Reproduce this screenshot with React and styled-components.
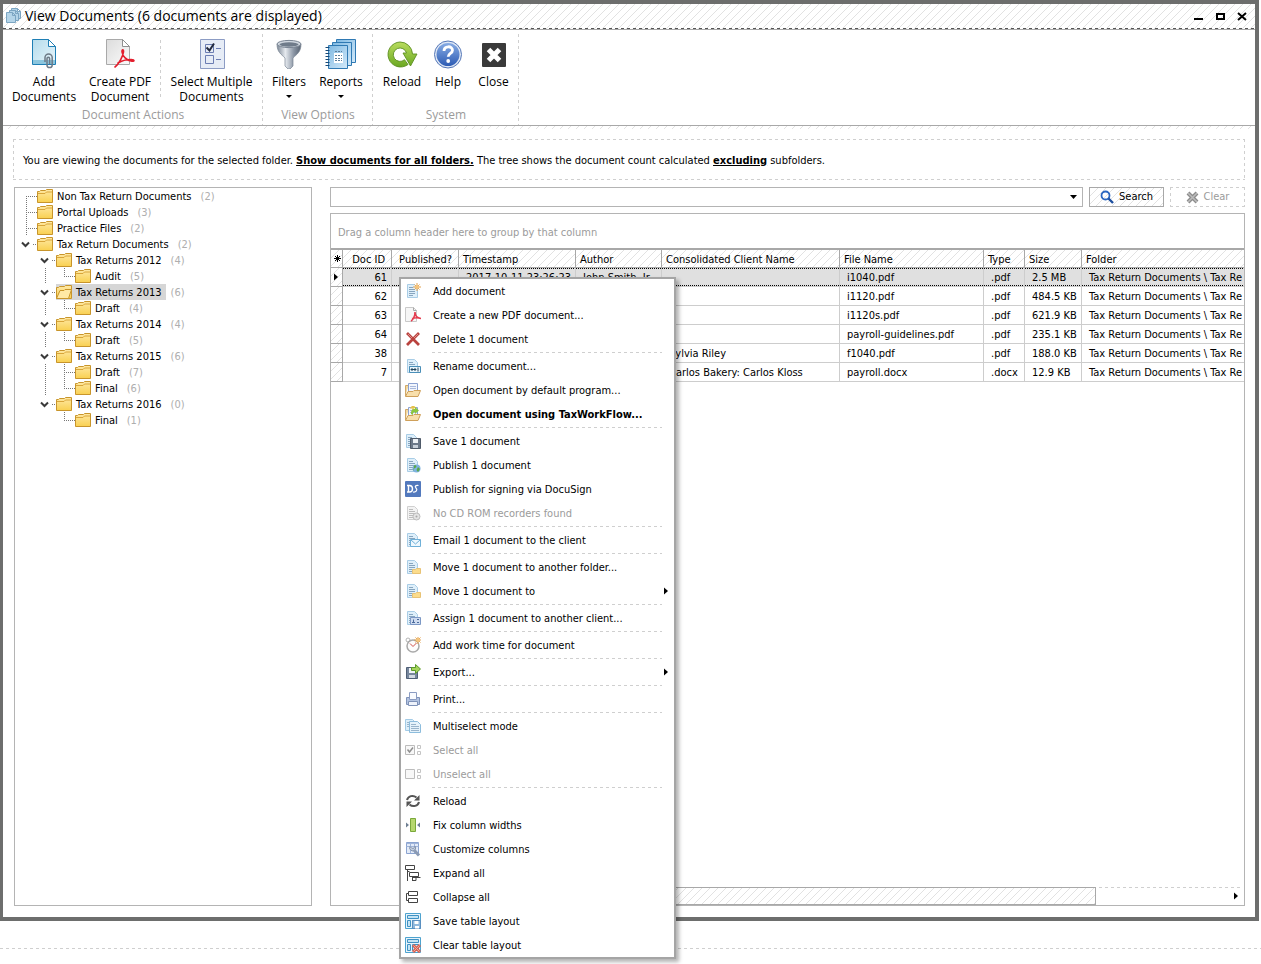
import React from "react";
import styled, { createGlobalStyle, css } from "styled-components";

const UI_FONT = '"DejaVu Sans Condensed", "Noto Sans", sans-serif';
const RIBBON_FONT = '"Open Sans", "Noto Sans", sans-serif';

const hatch = css`
  background-color: #fff;
  background-image: linear-gradient(
    135deg,
    transparent 45%,
    #e2e2e2 45%,
    #e2e2e2 55%,
    transparent 55%
  );
  background-size: 8px 8px;
`;

const dashX = (color) => `repeating-linear-gradient(90deg, ${color} 0 3px, transparent 3px 6px)`;
const dashY = (color) => `repeating-linear-gradient(180deg, ${color} 0 3px, transparent 3px 6px)`;

const dashedFrame = css`
  background-image: ${dashX("#cfcfcf")}, ${dashX("#cfcfcf")}, ${dashY("#cfcfcf")}, ${dashY("#cfcfcf")};
  background-size: 100% 1px, 100% 1px, 1px 100%, 1px 100%;
  background-position: top, bottom, left, right;
  background-repeat: no-repeat;
`;

const GlobalStyle = createGlobalStyle`
  * { box-sizing: border-box; }
  body {
    margin: 0;
    background: #fff;
    color: #000;
    font: 11px/16px ${UI_FONT};
  }
  button, input { font: inherit; color: inherit; }
`;

const Page = styled.div`
  position: relative;
  display: flex;
  flex-direction: column;
  min-height: 100vh;
`;

const Window = styled.main`
  flex: 1;
  display: flex;
  flex-direction: column;
  margin-right: 2px;
  border: 4px solid #6d6e6d;
  border-left-width: 3px;
`;

const Desk = styled.footer`
  height: 43px;
  padding-top: 27px;
  &::before {
    content: "";
    display: block;
    height: 1px;
    background: ${dashX("#cfcfcf")};
  }
`;

const TitleBar = styled.header`
  ${hatch}
  display: flex;
  align-items: center;
  gap: 4px;
  height: 26px;
  padding: 0 8px 2px 3px;
  border-bottom: 1px solid #a8a8a8;
  position: relative;
  &::after {
    content: "";
    position: absolute;
    left: 0;
    right: 0;
    bottom: 0;
    height: 1px;
    background: ${dashX("#555")};
  }
`;

const Title = styled.h1`
  flex: 1;
  margin: 0;
  font: 400 14px/20px ${RIBBON_FONT};
`;

const WindowButtons = styled.div`
  display: flex;
  gap: 12px;
`;

const PlainButton = styled.button`
  display: flex;
  padding: 0;
  border: 0;
  background: none;
`;

const Ribbon = styled.nav`
  display: flex;
  height: 96px;
  padding-top: 4px;
  border-bottom: 1px solid #a8a8a8;
  font: 12px/15px ${RIBBON_FONT};
`;

const RibbonEdge = styled.div`
  ${hatch}
  height: 3px;
`;

const Group = styled.section`
  display: flex;
  flex-direction: column;
  justify-content: space-between;
  background: ${dashY("#cfcfcf")} right / 1px 100% no-repeat;
`;

const GroupButtons = styled.div`
  display: flex;
  padding: 0 ${(p) => p.$end}px 0 ${(p) => p.$start}px;
`;

const GroupDivider = styled.span`
  width: 1px;
  height: 58px;
  margin: 6px 2px 0;
  background: ${dashY("#cfcfcf")};
`;

const GroupCaption = styled.h2`
  margin: 0;
  padding-bottom: 3px;
  color: #9b9b9b;
  font: inherit;
  text-align: center;
`;

const RibbonButton = styled.button`
  display: flex;
  flex-direction: column;
  align-items: center;
  width: ${(p) => p.$width}px;
  padding: 3px 0 0;
  border: 0;
  background: none;
  white-space: pre;
  & > svg { margin-bottom: 5px; }
`;

const DropMark = styled.span`
  margin-top: 6px;
  border: 3px solid transparent;
  border-top-color: #000;
  border-bottom: 0;
`;

const Content = styled.div`
  flex: 1;
  display: flex;
  flex-direction: column;
  gap: 7px;
  padding: 10px 10px 11px;
`;

const Notice = styled.p`
  ${dashedFrame}
  margin: 0;
  padding: 14px 10px 11px;
`;

const NoticeLink = styled.a`
  color: #000;
  font-weight: 700;
`;

const Panes = styled.div`
  flex: 1;
  display: flex;
  gap: 18px;
  padding-left: 1px;
`;

const TreePane = styled.ul`
  flex: 0 0 298px;
  margin: 0;
  padding: 0 0 0 3px;
  border: 1px solid #b4b4b4;
  list-style: none;
`;

const TreeRow = styled.li`
  display: flex;
  height: 16px;
  line-height: 18px;
`;

const TreeLabel = styled.a`
  display: flex;
  gap: 4px;
  height: 16px;
  padding-right: 4px;
  color: #000;
  text-decoration: none;
  background: ${(p) => (p.$selected ? "#d6d6d6" : "none")};
`;

const Count = styled.span`
  margin-left: 5px;
  color: #aeaeae;
`;

const ListPane = styled.div`
  flex: 1;
  min-width: 0;
  display: flex;
  flex-direction: column;
  gap: 6px;
`;

const SearchBar = styled.form`
  display: flex;
  gap: 6px;
  height: 20px;
`;

const SearchBox = styled.div`
  flex: 1;
  display: flex;
  align-items: center;
  padding-right: 5px;
  border: 1px solid #b4b4b4;
  & > input {
    flex: 1;
    min-width: 0;
    border: 0;
    padding: 0 4px;
    outline: none;
    background: none;
  }
`;

const SearchButton = styled.button`
  display: flex;
  align-items: center;
  justify-content: center;
  gap: 5px;
  width: 75px;
  padding: 0;
  ${(p) =>
    p.$off
      ? css`
          ${dashedFrame}
          background-color: #fff;
          border: 0;
          color: #9b9b9b;
        `
      : css`
          ${hatch}
          border: 1px solid #a8a8a8;
          color: #000;
        `}
`;

const GridPanel = styled.section`
  flex: 1;
  display: flex;
  flex-direction: column;
  border: 1px solid #b4b4b4;
  overflow: hidden;
`;

const GroupHint = styled.p`
  margin: 0;
  padding: 11px 7px 7px;
  color: #9b9b9b;
`;

const Grid = styled.table`
  width: 100%;
  table-layout: fixed;
  border-collapse: separate;
  border-spacing: 0;
  border-top: 2px solid #a8a8a8;
  white-space: nowrap;
`;

const HeadCell = styled.th`
  ${hatch}
  height: 18px;
  padding: 2px ${(p) => (p.$right ? 6 : 4)}px 0;
  border: 0 solid #a8a8a8;
  border-width: 0 1px 1px 0;
  font-weight: 400;
  line-height: 15px;
  text-align: ${(p) => (p.$right ? "right" : "left")};
  &:last-child { border-right: 0; }
`;

const MarkCell = styled.td`
  ${hatch}
  height: ${(p) => p.$height || 19}px;
  padding: 0 0 0 3px;
  border: 0 solid #a8a8a8;
  border-width: 0 1px 1px 0;
  line-height: 0;
`;

const Cell = styled.td`
  height: 19px;
  padding: 2px 4px 0 7px;
  border: 0 solid #cdcdcd;
  border-width: 0 1px 1px 0;
  line-height: 16px;
  overflow: hidden;
  text-align: ${(p) => (p.$right ? "right" : "left")};
  &:last-child { border-right: 0; padding-right: 0; }
  ${(p) =>
    p.$selected &&
    css`
      background-color: #e0e0e0;
      background-image: linear-gradient(90deg, #000 50%, transparent 50%),
        linear-gradient(90deg, #000 50%, transparent 50%);
      background-size: 2px 1px;
      background-position: left top, left bottom;
      background-repeat: repeat-x;
    `}
`;

const ScrollBar = styled.div`
  display: flex;
  align-items: center;
  gap: 138px;
  height: 18px;
  margin: auto 3px 0 90px;
  padding-right: 3px;
  background: ${dashX("#cfcfcf")} top / 100% 1px no-repeat;
`;

const ScrollThumb = styled.div`
  ${hatch}
  flex: 1;
  height: 18px;
  border: 1px solid #a8a8a8;
`;

const Menu = styled.div`
  position: absolute;
  left: 399px;
  top: 277px;
  width: 277px;
  border: 2px solid #a5a5a5;
  background: #fff;
  box-shadow: 3px 3px 4px rgba(0, 0, 0, 0.3);
`;

const MenuItem = styled.button`
  display: flex;
  align-items: center;
  gap: 12px;
  width: 100%;
  height: 24px;
  padding: 0 6px 0 4px;
  border: 0;
  background: none;
  color: ${(p) => (p.disabled ? "#9b9b9b" : "#000")};
  font-weight: ${(p) => (p.$strong ? 700 : 400)};
  text-align: left;
  & > svg { flex: none; }
  & > span { flex: 1; padding-top: 2px; white-space: nowrap; }
`;

const MenuRule = styled.hr`
  height: 3px;
  margin: 0 12px 0 31px;
  border: 0;
  background: ${dashX("#cfcfcf")} center / 100% 1px no-repeat;
`;

/* ---------- drawings ---------- */

const Svg = ({ s = 16, w = s, h = s, vb, children }) => (
  <svg width={w} height={h} viewBox={vb || `0 0 ${w} ${h}`} fill="none" aria-hidden="true">
    {children}
  </svg>
);

const RightArrow = () => (
  <Svg w={4} h={8}>
    <path d="M0 0.5 4 4 0 7.5z" fill="#000" />
  </Svg>
);

const DownArrow = () => (
  <Svg w={7} h={4}>
    <path d="M0 0h7L3.500 4z" fill="#000" />
  </Svg>
);

const DefsSvg = styled.svg`
  position: absolute;
`;

const Gradients = () => (
  <DefsSvg width="0" height="0" aria-hidden="true">
    <defs>
      <linearGradient id="page" x1="0" y1="0" x2="1" y2="1">
        <stop offset="0" stopColor="#b5dcec" />
        <stop offset="1" stopColor="#e8f5fb" />
      </linearGradient>
      <linearGradient id="grey" x1="0" y1="0" x2="1" y2="1">
        <stop offset="0" stopColor="#dcdcdc" />
        <stop offset="1" stopColor="#fbfbfb" />
      </linearGradient>
      <linearGradient id="steel" x1="0" y1="0" x2="1" y2="0">
        <stop offset="0" stopColor="#7d8896" />
        <stop offset="0.350" stopColor="#e6eaef" />
        <stop offset="0.700" stopColor="#8a95a4" />
        <stop offset="1" stopColor="#566170" />
      </linearGradient>
      <linearGradient id="green" x1="0" y1="0" x2="0" y2="1">
        <stop offset="0" stopColor="#b9dc5e" />
        <stop offset="1" stopColor="#6aa821" />
      </linearGradient>
      <linearGradient id="blue" x1="0" y1="0" x2="0" y2="1">
        <stop offset="0" stopColor="#86abe4" />
        <stop offset="1" stopColor="#2d5cb4" />
      </linearGradient>
      <linearGradient id="book" x1="0" y1="0" x2="1" y2="1">
        <stop offset="0" stopColor="#7fb9e2" />
        <stop offset="1" stopColor="#d4eafa" />
      </linearGradient>
      <linearGradient id="gold" x1="0" y1="0" x2="0" y2="1">
        <stop offset="0" stopColor="#ffe9a6" />
        <stop offset="1" stopColor="#f9d050" />
      </linearGradient>
    </defs>
  </DefsSvg>
);

const TitleIcon = () => (
  <Svg s={15}>
    {[[5, 0], [3, 2], [0, 4]].map(([x, y]) => (
      <path
        key={x}
        transform={`translate(${x} ${y})`}
        d="M.5.5h6l3 3v7h-9z M6.500.5v3h3"
        fill="#b4d4e8"
        stroke="#7ba5c2"
      />
    ))}
  </Svg>
);

const AddDocIcon = () => (
  <Svg s={32}>
    <path d="M4.500 2.500h16l7 7v18h-23z" fill="url(#page)" stroke="#1f7fb5" />
    <path d="M5 23h22v4H5z" fill="#8cc6de" />
    <path d="M20.500 2.500v7h7z" fill="#fff" stroke="#1f7fb5" />
    <path
      d="M17 25v-4.500a3.600 3.600 0 0 1 7.200 0V28a2.600 2.600 0 0 1-5.200 0v-6.500a1.300 1.300 0 0 1 2.600 0V27"
      stroke="#6d7a87"
      strokeWidth="1.500"
    />
  </Svg>
);

const PdfIcon = () => (
  <Svg s={32}>
    <path d="M2.500 2.500h16l7 7v18h-23z" fill="url(#grey)" stroke="#a9a9a9" />
    <path d="M18.500 2.500v7h7z" fill="#fff" stroke="#8f8f8f" />
    <path
      d="M11 30c4-3 8-11 8.500-15 .3-3-1.800-3-1.500 0 .6 4 4 8 9 9 4 .8 4-1.300 0-1.500-5 0-9 1-13 3.500"
      stroke="#e31e2d"
      strokeWidth="1.600"
      strokeLinecap="round"
    />
  </Svg>
);

const SelectIcon = () => (
  <Svg s={32}>
    <path d="M4.500 2.500h24v29h-24z" fill="#e6ecf6" stroke="#8c9cc4" />
    <path d="M9.500 7.500h8v8h-8z M9.500 18.500h8v8h-8z M20 11.500h5 M20 22.500h5" stroke="#6b7db3" />
    <path d="m10.500 10.500 3 3L18 6.500" stroke="#222a3d" strokeWidth="2" />
  </Svg>
);

const FunnelIcon = () => (
  <Svg s={32}>
    <path d="M4 7c0 8 4 10 8 14v8l3 3h2l3-3v-8c4-4 8-6 8-14z" fill="url(#steel)" stroke="#7a8594" strokeWidth=".7" />
    <ellipse cx="16" cy="7" rx="12" ry="3.600" fill="#d0d7df" stroke="#7a8594" />
    <ellipse cx="16" cy="7.500" rx="9.500" ry="2.200" fill="#6f7b8a" />
  </Svg>
);

const ReportsIcon = () => (
  <Svg s={32}>
    <path d="M11.500 2.500h19v23h-19z" fill="url(#book)" stroke="#2f79b3" />
    <path d="M7.500 5.500h19v23h-19z" fill="url(#book)" stroke="#2f79b3" />
    <path d="M3.500 8.500h19v23h-19z" fill="url(#book)" stroke="#2f79b3" />
    <path d="M9 16h9v10H9z" fill="#fff" />
    <path d="M10 14.500h7M10 18.500h7M10 21.500h7M10 23.500h7" stroke="#5d7f9c" strokeDasharray="2 1" />
    <path d="M2.500 10v20" stroke="#174a78" strokeWidth="4" strokeDasharray="1 2" />
  </Svg>
);

const ReloadBigIcon = () => (
  <Svg s={32}>
    <path
      d="M14 5a12.500 12.500 0 1 0 8 22.500l-3.500-4.800a6.700 6.700 0 1 1 2-6.700H17l7.500 13L31 17h-4.500A12.500 12.500 0 0 0 14 5z"
      fill="url(#green)"
      stroke="#5c8f22"
      strokeWidth=".9"
    />
  </Svg>
);

const HelpIcon = () => (
  <Svg s={32}>
    <circle cx="16" cy="17.500" r="13.500" fill="#dfe7f4" stroke="#5477b8" />
    <circle cx="16" cy="17.500" r="11.500" fill="url(#blue)" />
    <path
      d="M12 14c0-5.500 8.500-5.500 8.500-.8 0 3.300-4.300 3.200-4.300 6.600"
      stroke="#fff"
      strokeWidth="2.800"
    />
    <circle cx="16.200" cy="24" r="1.900" fill="#fff" />
  </Svg>
);

const CloseBigIcon = () => (
  <Svg s={32}>
    <rect x="4" y="6" width="24" height="24" rx="1" fill="#3a3a3a" />
    <path d="m10.500 12.500 11 11m0-11-11 11" stroke="#fff" strokeWidth="5" />
  </Svg>
);

const Folder = ({ open }) => (
  <Svg s={16}>
    <path d="M.5 14.500v-11h2l1-1h5l1-1h6v13z" fill="url(#gold)" stroke="#c8952b" />
    {open ? (
      <path d="M.5 14.500 4 6.500h4l1-1h6.500l-3 9z" fill="#ffe9a6" stroke="#c8952b" />
    ) : (
      <path d="M1 5.500h7l1.500-1.500H15" stroke="#d8a53a" />
    )}
  </Svg>
);

const guidePaths = {
  start: "M8.500 8v8M8 8.500h11",
  tee: "M8.500 0v16M8 8.500h11",
  end: "M8.500 0v9M8 8.500h11",
  line: "M8.500 0v16",
  chev: "M15 8.500h4",
  blank: "",
};

const Guide = ({ kind }) => (
  <Svg w={19} h={16}>
    <path d={guidePaths[kind]} stroke="#777" strokeDasharray="1 1" />
    {kind === "chev" && <path d="M4 6.500 7.500 10 11 6.500" stroke="#3a3a3a" strokeWidth="2" />}
  </Svg>
);

const SearchIcon = () => (
  <Svg s={14}>
    <circle cx="5.500" cy="5.500" r="4" stroke="#2a66c0" strokeWidth="1.800" />
    <path d="m8.500 8.500 4.500 4.500" stroke="#1d4f9f" strokeWidth="2.400" />
  </Svg>
);

const ClearIcon = () => (
  <Svg s={13}>
    <path d="m2 2 9 9m0-9-9 9" stroke="#8d8d8d" strokeWidth="4" />
    <path d="m2 2 9 9m0-9-9 9" stroke="#bcbcbc" strokeWidth="1.500" />
  </Svg>
);

const Sheet = ({ x = 1, grey, children }) => (
  <Svg s={16}>
    <path
      transform={`translate(${x} 0)`}
      d="M1.500 1.500h7l3 3v10h-10z"
      fill={grey ? "#f3f3f3" : "#deeffa"}
      stroke={grey ? "#d0d0d0" : "#a9cde6"}
    />
    <path
      transform={`translate(${x} 0)`}
      d="M3 4.500h4M3 6.500h6M3 8.500h6M3 10.500h6M3 12.500h4"
      stroke={grey ? "#bcbcbc" : "#87a5bf"}
    />
    {children}
  </Svg>
);

const Burst = () => (
  <g>
    <path d="M12 0v8M8 4h8M9.500 1.500l5 5m0-5-5 5" stroke="#e2a14e" />
    <circle cx="12" cy="4" r="2" fill="#f4c47c" />
  </g>
);

const OpenTray = ({ children }) => (
  <Svg s={16}>
    <path d="M.5 14V3.500h3" fill="#f3d9a0" stroke="#d0a868" />
    <path d="M3.500 1.500h9v9h-9z" fill="#f2f6fd" stroke="#8ba2d2" />
    <path d="M5 4.500h6M5 6.500h6" stroke="#a9b9dc" />
    {children}
    <path d="M.5 14.500 3 9.500h5l1-1h6.500l-2.500 6z" fill="#f8dfab" stroke="#cfa05a" />
  </Svg>
);

const LayoutFrame = ({ children }) => (
  <Svg s={16}>
    <path d="M.5.5h15v15H.5z" fill="#e7f4fb" stroke="#4ea3cf" />
    <path d="M2.500 2.500h11v3h-11z M2.500 7.500h3v6h-3z M7.500 7.500h6v6h-6z" fill="#c5e4f4" stroke="#3f92c4" />
    {children}
  </Svg>
);

const CheckTiles = ({ ticked }) => (
  <Svg s={16}>
    <path d="M.5 3.500h9v9h-9z" fill="#f8f8f8" stroke="#bcbcbc" />
    <path d="M12.500 3.500h3v3h-3z M12.500 9.500h3v3h-3z" stroke="#c4c4c4" />
    {ticked && <path d="m2.500 7.500 2 2.500L8 5.500" stroke="#8f8f8f" strokeWidth="1.500" />}
  </Svg>
);

const icons = {
  add: <Sheet><Burst /></Sheet>,
  pdf: (
    <Svg s={16}>
      <path d="M.5.5h8l3 3v11H.5z" fill="#f6f6f6" stroke="#c9c9c9" />
      <path d="M8.500.5v3h3" stroke="#a9a9a9" />
      <path d="M6 14c2-1 4-5 4-9m0 0c0 4 2 6 6 6.500M7 11.500c3-1 6-1 9 0" stroke="#e43b4e" strokeWidth="1.500" />
    </Svg>
  ),
  remove: (
    <Svg s={16}>
      <path d="m2 2 12 12M14 2 2 14" stroke="#b9423e" strokeWidth="2.800" />
      <path d="m3 3 4 4m6-4L9 7" stroke="#e08d88" />
    </Svg>
  ),
  rename: (
    <Sheet>
      <path d="M4.500 8.500h11v6h-11z" fill="#eaf6fd" stroke="#4a8fb8" />
      <path d="M6 11.500h5M7.500 10 6 11.500 7.500 13M9.500 10l1.500 1.500L9.500 13M13 9.500v4" stroke="#24455c" />
    </Sheet>
  ),
  openDefault: <OpenTray />,
  openApp: (
    <OpenTray>
      <path d="M8 0v4M5.500 2.500 8 0l3 2.500" stroke="#e6c14a" strokeWidth="1.500" />
      <path d="M6 8c0-4 1-5 4-5V1l4 3.500L10 8V6C8 6 8 7 8 9z" fill="#8cc63f" />
    </OpenTray>
  ),
  save: (
    <Sheet x={0}>
      <path d="M5.500 5.500h10v10h-10z" fill="#6b7889" stroke="#4f5a69" />
      <path d="M8 6h5v4H8z" fill="#edf1f6" />
      <path d="M8 12h5v3H8z" fill="#c8d0da" />
    </Sheet>
  ),
  publish: (
    <Sheet>
      <circle cx="11.500" cy="11.500" r="4" fill="#7fb2e0" />
      <path d="M9 8.500c3-1 3 2 1 2.500s0 3-1.500 2.500zM13 10l2 2-2 3-1.500-2z" fill="#58a845" />
    </Sheet>
  ),
  docusign: (
    <Svg s={16}>
      <rect width="16" height="16" rx="1" fill="#5279bd" />
      <path d="M3.500 4.500v6M2 4.500h2.500c4 0 4 6.500 0 6.500H2" stroke="#fff" strokeWidth="1.400" />
      <path d="M13.500 4.500c-3-.5-4 1-2.500 2.500 2 2 0 4.500-3 4" stroke="#fff" strokeWidth="1.200" />
    </Svg>
  ),
  cd: (
    <Sheet grey>
      <circle cx="11.500" cy="11.500" r="3.500" fill="#e4e4e4" stroke="#bdbdbd" />
      <circle cx="11.500" cy="11.500" r="1" fill="#a8a8a8" />
    </Sheet>
  ),
  email: (
    <Sheet>
      <path d="M5.500 7.500h10v7h-10z" fill="#eef8fe" stroke="#6fb0d8" />
      <path d="m6 8 4.500 4L15 8" stroke="#6fb0d8" />
    </Sheet>
  ),
  move: (
    <Sheet>
      <path d="M7.500 14.500v-4h3l1-1h4v5z" fill="#fbdc8c" stroke="#e8c375" />
    </Sheet>
  ),
  assign: (
    <Sheet>
      <path d="M5.500 7.500h10v7h-10z" fill="#cfdcf0" stroke="#7c98c5" />
      <path d="M8.500 9.500v3M7 12.500h3M12 9.500h2M12 12.500h2" stroke="#4c6b9c" />
    </Sheet>
  ),
  clock: (
    <Svg s={16}>
      <circle cx="3" cy="3" r="2" stroke="#b4b4b4" />
      <circle cx="8" cy="9" r="6" fill="#fdfdfd" stroke="#a9a9a9" strokeWidth="1.500" />
      <path d="m5 6.500 3 3 3.500-3.500" stroke="#d0504a" />
      <g transform="translate(1 -1)"><Burst /></g>
    </Svg>
  ),
  exporting: (
    <Svg s={16}>
      <path d="M1.500 3.500h11v11h-11z" fill="#76869c" stroke="#4f5f76" />
      <path d="M4 4h6v5H4z" fill="#f1f4f8" />
      <path d="M4 11h6v3H4z" fill="#d3dae3" />
      <path d="M6.500 3.500h4v-3l5 4.500-5 4.500v-3h-4z" fill="#a5d45c" stroke="#5c9a2b" />
    </Svg>
  ),
  print: (
    <Svg s={16}>
      <path d="M1.500 6.500h13v7h-13z" fill="#b3c3e0" stroke="#7f92b8" />
      <path d="M4.500 1.500h7v7h-7z" fill="#fafcff" stroke="#8b9cc2" />
      <path d="M3.500 10.500h9v4h-9z" fill="#eef2fa" stroke="#7f92b8" />
    </Svg>
  ),
  multi: (
    <Svg s={16}>
      <path d="M.5 1.500h7l2 2v9h-9z" fill="#deeffa" stroke="#a3cbe6" />
      <path d="M4.500 3.500h8l3 3v8h-11z" fill="#e6f3fb" stroke="#8dbddd" />
      <path d="M6 6.500h5M6 8.500h8M6 10.500h8M6 12.500h8M2 4.500h2M2 6.500h2M2 8.500h2" stroke="#9ab5cc" />
    </Svg>
  ),
  ticked: <CheckTiles ticked />,
  unticked: <CheckTiles />,
  reload: (
    <Svg s={16}>
      <path d="M2 7c1-4 6-5.500 9.500-2.500M14 9c-1 4-6 5.500-9.500 2.500" stroke="#555" strokeWidth="2" />
      <path d="M14.500 2v5.500H9z M1.500 14V8.500H7z" fill="#555" />
    </Svg>
  ),
  widths: (
    <Svg s={16}>
      <path d="M5.500 1.500h5v13h-5z" fill="#b6d76e" stroke="#7aa83a" />
      <path d="M1 5.500 4 8l-3 2.500zM15 5.500 12 8l3 2.500z" fill="#6f7f93" />
    </Svg>
  ),
  customize: (
    <Svg s={16}>
      <path d="M1.500 1.500h12v11h-12z" fill="#e3ebf8" stroke="#8aa3d0" />
      <path d="M1.500 2.500h12M1.500 5.500h12M5.500 2v10M9.500 2v10" stroke="#9fb4da" />
      <path d="m9 9 5 5.500" stroke="#8b9bb5" strokeWidth="3" />
      <path d="M5 5.500a3 3 0 1 0 5-.5L8.500 7.500 6.500 7z" fill="#c3cede" stroke="#8494ad" />
    </Svg>
  ),
  expand: (
    <Svg s={16}>
      <path d="M.5.500h9v4h-9zM4.500 7.500h9v4h-9zM2.500 5v11M2 6.500h2.500M7.500 12v4M7 12.500h8.500M8 15.500h3v-3" stroke="#444" />
    </Svg>
  ),
  collapse: (
    <Svg s={16}>
      <path d="M3.500 2.500h9v4h-9zM3.500 9.500h9v4h-9zM3 4.500H1.500v7H3" stroke="#444" />
    </Svg>
  ),
  layoutSave: (
    <LayoutFrame>
      <path d="M7.500 7.500h8v8h-8z" fill="#8fb8dc" stroke="#5a8fc0" />
      <path d="M9.500 8h4v3h-4zM10 13h4v2.500h-4z" fill="#fff" />
    </LayoutFrame>
  ),
  layoutClear: (
    <LayoutFrame>
      <path d="m8 8 7 7m0-7-7 7" stroke="#d9604f" strokeWidth="3" />
      <path d="m8.500 8.500 6 6m0-6-6 6" stroke="#f0a598" />
    </LayoutFrame>
  ),
};

/* ---------- data ---------- */

const tree = [
  [["start"], "Non Tax Return Documents", 2],
  [["tee"], "Portal Uploads", 3],
  [["tee"], "Practice Files", 2],
  [["chev"], "Tax Return Documents", 2],
  [["blank", "chev"], "Tax Returns 2012", 4],
  [["blank", "line", "end"], "Audit", 5],
  [["blank", "chev"], "Tax Returns 2013", 6, true],
  [["blank", "line", "end"], "Draft", 4],
  [["blank", "chev"], "Tax Returns 2014", 4],
  [["blank", "line", "end"], "Draft", 5],
  [["blank", "chev"], "Tax Returns 2015", 6],
  [["blank", "line", "tee"], "Draft", 7],
  [["blank", "line", "end"], "Final", 6],
  [["blank", "chev"], "Tax Returns 2016", 0],
  [["blank", "blank", "end"], "Final", 1],
];

const columns = [
  { name: "Doc ID", width: 49, right: true },
  { name: "Published?", width: 67, right: true },
  { name: "Timestamp", width: 117 },
  { name: "Author", width: 86 },
  { name: "Consolidated Client Name", width: 178 },
  { name: "File Name", width: 144 },
  { name: "Type", width: 41 },
  { name: "Size", width: 57 },
  { name: "Folder" },
];

const FOLDER = "Tax Return Documents \\ Tax Re";

const rows = [
  ["61", "", "2017-10-11 23:26:23", "John Smith, Jr.", "", "i1040.pdf", ".pdf", "2.5 MB", FOLDER],
  ["62", "", "", "", "", "i1120.pdf", ".pdf", "484.5 KB", FOLDER],
  ["63", "", "", "", "", "i1120s.pdf", ".pdf", "621.9 KB", FOLDER],
  ["64", "", "", "", "", "payroll-guidelines.pdf", ".pdf", "235.1 KB", FOLDER],
  ["38", "", "", "", "Sylvia Riley", "f1040.pdf", ".pdf", "188.0 KB", FOLDER],
  ["7", "", "", "", "Carlos Bakery: Carlos Kloss", "payroll.docx", ".docx", "12.9 KB", FOLDER],
];

const menu = [
  ["add", "Add document"],
  ["pdf", "Create a new PDF document..."],
  ["remove", "Delete 1 document"],
  null,
  ["rename", "Rename document..."],
  ["openDefault", "Open document by default program..."],
  ["openApp", "Open document using TaxWorkFlow...", { strong: true }],
  null,
  ["save", "Save 1 document"],
  ["publish", "Publish 1 document"],
  ["docusign", "Publish for signing via DocuSign"],
  ["cd", "No CD ROM recorders found", { off: true }],
  null,
  ["email", "Email 1 document to the client"],
  null,
  ["move", "Move 1 document to another folder..."],
  ["move", "Move 1 document to", { sub: true }],
  null,
  ["assign", "Assign 1 document to another client..."],
  null,
  ["clock", "Add work time for document"],
  null,
  ["exporting", "Export...", { sub: true }],
  null,
  ["print", "Print..."],
  null,
  ["multi", "Multiselect mode"],
  ["ticked", "Select all", { off: true }],
  ["unticked", "Unselect all", { off: true }],
  null,
  ["reload", "Reload"],
  ["widths", "Fix column widths"],
  ["customize", "Customize columns"],
  ["expand", "Expand all"],
  ["collapse", "Collapse all"],
  ["layoutSave", "Save table layout"],
  ["layoutClear", "Clear table layout"],
];

/* ---------- parts ---------- */

const RibbonAction = ({ icon, width, drop, children }) => (
  <RibbonButton type="button" $width={width}>
    {icon}
    <span>{children}</span>
    {drop && <DropMark />}
  </RibbonButton>
);

const AppRibbon = () => (
  <Ribbon aria-label="Ribbon">
    <Group>
      <GroupButtons $start={3} $end={3}>
        <RibbonAction icon={<AddDocIcon />} width={76}>{"Add\nDocuments"}</RibbonAction>
        <RibbonAction icon={<PdfIcon />} width={76}>{"Create PDF\nDocument"}</RibbonAction>
        <GroupDivider />
        <RibbonAction icon={<SelectIcon />} width={97}>{"Select Multiple\nDocuments"}</RibbonAction>
      </GroupButtons>
      <GroupCaption>Document Actions</GroupCaption>
    </Group>
    <Group>
      <GroupButtons $start={0} $end={6}>
        <RibbonAction icon={<FunnelIcon />} width={52} drop>Filters</RibbonAction>
        <RibbonAction icon={<ReportsIcon />} width={52} drop>Reports</RibbonAction>
      </GroupButtons>
      <GroupCaption>View Options</GroupCaption>
    </Group>
    <Group>
      <GroupButtons $start={6} $end={3}>
        <RibbonAction icon={<ReloadBigIcon />} width={46}>Reload</RibbonAction>
        <RibbonAction icon={<HelpIcon />} width={46}>Help</RibbonAction>
        <RibbonAction icon={<CloseBigIcon />} width={45}>Close</RibbonAction>
      </GroupButtons>
      <GroupCaption>System</GroupCaption>
    </Group>
  </Ribbon>
);

const FolderTree = () => (
  <TreePane aria-label="Folders">
    {tree.map(([guides, name, count, selected], i) => (
      <TreeRow key={i}>
        {guides.map((kind, g) => (
          <Guide key={g} kind={kind} />
        ))}
        <TreeLabel href="#folder" $selected={selected}>
          <Folder open={selected} />
          {name}
        </TreeLabel>
        <Count>({count})</Count>
      </TreeRow>
    ))}
  </TreePane>
);

const DocumentGrid = () => (
  <Grid>
    <colgroup>
      <col width={12} />
      {columns.map((c) => (
        <col key={c.name} width={c.width} />
      ))}
    </colgroup>
    <thead>
      <tr>
        <MarkCell $height={18}>
          <Svg s={7}>
            <path d="M3.500 0v7M0 3.500h7M1 1l5 5m0-5-5 5" stroke="#000" />
          </Svg>
        </MarkCell>
        {columns.map((c) => (
          <HeadCell key={c.name} scope="col" $right={c.right}>{c.name}</HeadCell>
        ))}
      </tr>
    </thead>
    <tbody>
      {rows.map((row, r) => (
        <tr key={row[0]}>
          <MarkCell>{r === 0 && <RightArrow />}</MarkCell>
          {row.map((value, c) => (
            <Cell key={c} $right={columns[c].right} $selected={r === 0}>{value}</Cell>
          ))}
        </tr>
      ))}
    </tbody>
  </Grid>
);

const ContextMenu = () => (
  <Menu role="menu" aria-label="Document actions">
    {menu.map((item, i) => {
      if (!item) return <MenuRule key={i} />;
      const [icon, label, opts = {}] = item;
      return (
        <MenuItem key={i} type="button" role="menuitem" disabled={opts.off} $strong={opts.strong}>
          {icons[icon]}
          <span>{label}</span>
          {opts.sub && <RightArrow />}
        </MenuItem>
      );
    })}
  </Menu>
);

export default function App() {
  return (
    <Page>
      <GlobalStyle />
      <Gradients />
      <Window>
        <TitleBar>
          <TitleIcon />
          <Title>View Documents (6 documents are displayed)</Title>
          <WindowButtons>
            <PlainButton type="button" aria-label="Minimize">
              <Svg s={10}><path d="M1 8h9" stroke="#000" strokeWidth="2" /></Svg>
            </PlainButton>
            <PlainButton type="button" aria-label="Maximize">
              <Svg s={10}><path d="M2 3h7v5H2z" stroke="#000" strokeWidth="2" /></Svg>
            </PlainButton>
            <PlainButton type="button" aria-label="Close window">
              <Svg s={10}><path d="m1 2 8 7m0-7-8 7" stroke="#000" strokeWidth="2" /></Svg>
            </PlainButton>
          </WindowButtons>
        </TitleBar>
        <AppRibbon />
        <RibbonEdge />
        <Content>
          <Notice>
            You are viewing the documents for the selected folder.{" "}
            <NoticeLink href="#all">Show documents for all folders.</NoticeLink> The tree shows the
            document count calculated <NoticeLink href="#sub">excluding</NoticeLink> subfolders.
          </Notice>
          <Panes>
            <FolderTree />
            <ListPane>
              <SearchBar onSubmit={(e) => e.preventDefault()}>
                <SearchBox>
                  <input type="text" aria-label="Search documents" />
                  <PlainButton type="button" aria-label="Show recent searches">
                    <DownArrow />
                  </PlainButton>
                </SearchBox>
                <SearchButton type="submit">
                  <SearchIcon />
                  Search
                </SearchButton>
                <SearchButton type="reset" disabled $off>
                  <ClearIcon />
                  Clear
                </SearchButton>
              </SearchBar>
              <GridPanel>
                <GroupHint>Drag a column header here to group by that column</GroupHint>
                <DocumentGrid />
                <ScrollBar>
                  <ScrollThumb />
                  <RightArrow />
                </ScrollBar>
              </GridPanel>
            </ListPane>
          </Panes>
        </Content>
      </Window>
      <Desk />
      <ContextMenu />
    </Page>
  );
}
